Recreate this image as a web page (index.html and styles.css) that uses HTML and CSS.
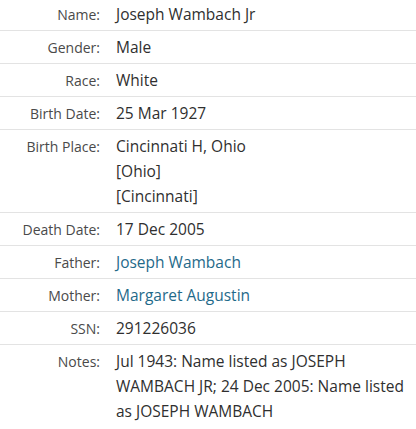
FILE: index.html
```html
<!DOCTYPE html>
<html>
<head>
<meta charset="utf-8">
<link rel="stylesheet" href="styles.css">
</head>
<body>
<div class="record">
  <div class="row"><div class="label">Name:</div><div class="value">Joseph Wambach Jr</div></div>
  <div class="row"><div class="label">Gender:</div><div class="value">Male</div></div>
  <div class="row"><div class="label">Race:</div><div class="value">White</div></div>
  <div class="row"><div class="label">Birth Date:</div><div class="value">25 Mar 1927</div></div>
  <div class="row"><div class="label">Birth Place:</div><div class="value">Cincinnati H, Ohio<br>[Ohio]<br>[Cincinnati]</div></div>
  <div class="row"><div class="label">Death Date:</div><div class="value">17 Dec 2005</div></div>
  <div class="row"><div class="label">Father:</div><div class="value"><a class="link" href="#">Joseph Wambach</a></div></div>
  <div class="row"><div class="label">Mother:</div><div class="value"><a class="link" href="#">Margaret Augustin</a></div></div>
  <div class="row"><div class="label">SSN:</div><div class="value">291226036</div></div>
  <div class="row last"><div class="label">Notes:</div><div class="value">Jul 1943: Name listed as JOSEPH WAMBACH JR; 24 Dec 2005: Name listed as JOSEPH WAMBACH</div></div>
</div>
</body>
</html>
```

FILE: styles.css
```css
html, body {
  margin: 0;
  padding: 0;
  background: #fff;
}
body {
  font-family: "Open Sans", "Liberation Sans", sans-serif;
  color: #2f2f2f;
  font-size: 15.5px;
}
.record {
  display: flex;
  flex-direction: column;
}
.row {
  display: grid;
  grid-template-columns: 100px 1fr;
  column-gap: 16px;
  padding: 4px 0 3px 0;
  line-height: 25px;
  border-bottom: 1px solid #e3e3e3;
}
.row:first-child {
  padding-top: 2px;
  padding-bottom: 3px;
}
.row.last {
  border-bottom: none;
}
.label {
  text-align: right;
  color: #4a4a4a;
  font-size: 14px;
}
.link {
  color: #1f6a8a;
  text-decoration: none;
}
```
